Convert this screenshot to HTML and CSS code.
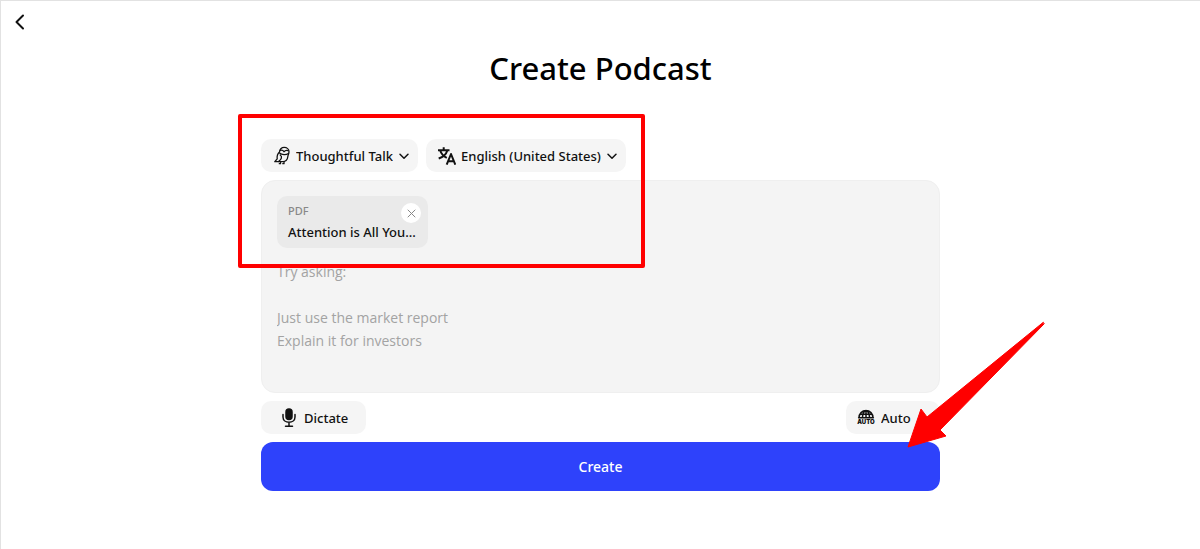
FILE: index.html
```html
<!DOCTYPE html>
<html lang="en">
<head>
    <meta charset="UTF-8">
    <meta name="viewport" content="width=device-width, initial-scale=1.0">
    <title>Create Podcast</title>
    <link rel="stylesheet" href="styles.css">
</head>
<body>
    <header class="topbar">
        <button class="back-btn" type="button" aria-label="Back">
            <svg width="20" height="20" viewBox="0 0 20 20"><path d="M14 3.500 7.500 10l6.500 6.500" /></svg>
        </button>
    </header>

    <main class="content">
        <h1>Create Podcast</h1>

        <form class="podcast-form">
            <div class="row">
                <label class="pill">
                    <!-- Owl -->
                    <svg class="icon owl" width="18" height="20" viewBox="0 0 18 20">
                        <path d="M6.500 6C6.500 3.300 8.500 1.400 11.200 1.400s4.800 1.800 4.800 4.300c0 2-1 2.700-1.200 5-.3 3.200-2.800 5-5.800 5H1.800l2.400-2.900c-.4-2.800.2-4.800 2.300-6.800z" />
                        <path d="M7.500 4.300c1.500-.3 2.800.2 3.500 1.500.8-1.200 2.500-1.700 4.200-1.200M6.500 7c2.500 2.200 6.500 2.200 9 .5M7.200 9c2.400 1.600 1.300 4.700-1.700 6.500M7.500 15.700v2H6.300M11 15.500v2.200H9.800" />
                    </svg>
                    <select aria-label="Style">
                        <option>Thoughtful Talk</option>
                    </select>
                    <svg class="chevron" width="12" height="12" viewBox="0 0 12 12"><path d="M2 4.200 6 8.200 10 4.200" /></svg>
                </label>

                <label class="pill">
                    <!-- Translate -->
                    <svg class="icon translate" width="18" height="20" viewBox="0 0 18 20">
                        <path d="M0 4.200h11.500M5.700 1.200v3M2.200 4.500c1 3.200 3.500 5.800 6.600 7.300M9.300 4.500C8.300 8 5 11 .7 12.500" />
                        <path d="M8.700 18.700 13 8l4.300 10.700M10.300 15.300h5.400" />
                    </svg>
                    <select aria-label="Language">
                        <option>English (United States)</option>
                    </select>
                    <svg class="chevron" width="12" height="12" viewBox="0 0 12 12"><path d="M2 4.200 6 8.200 10 4.200" /></svg>
                </label>
            </div>

            <div class="prompt-box">
                <div class="file-chip">
                    <div class="file-type">PDF</div>
                    <div class="file-name">Attention is All You...</div>
                    <button class="remove-btn" type="button" aria-label="Remove file">
                        <svg width="9" height="9" viewBox="0 0 9 9"><path d="M1 1l7 7M8 1 1 8" /></svg>
                    </button>
                </div>
                <textarea class="prompt" rows="5" aria-label="Prompt" placeholder="Try asking:&#10;&#10;Just use the market report&#10;Explain it for investors"></textarea>
            </div>

            <div class="row row-spread">
                <button class="pill dictate" type="button">
                    <svg class="icon" width="16" height="20" viewBox="0 0 16 20">
                        <rect class="solid" x="5" y="1" width="6" height="10.500" rx="3" />
                        <path d="M2 6.500V9c0 7 12 7 12 0V6.500M8 14.500V18M4.500 18.200h7" />
                    </svg>
                    Dictate
                </button>

                <label class="pill auto">
                    <!-- Half globe with AUTO caption -->
                    <svg class="icon globe" width="20" height="20" viewBox="0 0 20 20">
                        <path d="M3 9.800a7 7.300 0 0 1 14 0M2.600 9.800h14.800M10 2.500v7.300M4 6.200h12M6.500 9.800c0-4 1.500-6.500 3.500-7.300 2 .8 3.500 3.300 3.500 7.300" />
                        <text x="10" y="16" text-anchor="middle">AUTO</text>
                    </svg>
                    <select aria-label="Source">
                        <option>Auto</option>
                    </select>
                    <svg class="chevron" width="12" height="12" viewBox="0 0 12 12"><path d="M2 4.200 6 8.200 10 4.200" /></svg>
                </label>
            </div>

            <button class="create-btn" type="submit">Create</button>

            <!-- Highlight frame and arrow -->
            <div class="highlight"></div>
            <svg class="arrow" width="138" height="128" viewBox="0 0 138 128">
                <path d="M135 1.500 19 96 13 88 0 126 38 115 32 109 136 3z" />
            </svg>
        </form>
    </main>
</body>
</html>
```
FILE: styles.css
```css
* {
    box-sizing: border-box;
}
body {
    margin: 0;
    min-height: 100vh;
    background-color: #fff;
    border-top: 1px solid #e2e2e2;
    border-left: 1px solid #e2e2e2;
    color: #111;
    font-family: "Noto Sans", "Open Sans", sans-serif;
    font-size: 13px;
    font-weight: 500;
}
button, select, textarea {
    font: inherit;
    color: inherit;
    border: none;
    background: none;
    padding: 0;
    margin: 0;
}
button {
    cursor: pointer;
}
svg {
    display: block;
    flex: none;
    fill: none;
    stroke: #111;
    stroke-linecap: round;
    stroke-linejoin: round;
}
.topbar {
    height: 43px;
    padding: 11px 8px;
}
.back-btn svg {
    stroke-width: 2;
}
.content {
    max-width: 711px;
    margin: 0 auto;
    padding: 0 16px;
}
h1 {
    margin: 0 0 47px;
    text-align: center;
    font-size: 31px;
    line-height: 48px;
    font-weight: 500;
    color: #000;
}
.podcast-form {
    position: relative;
    display: flex;
    flex-direction: column;
    gap: 8px;
}
.row {
    display: flex;
    gap: 8px;
}
.row-spread {
    justify-content: space-between;
}
.pill {
    display: flex;
    align-items: center;
    gap: 5px;
    height: 33px;
    padding: 0 8px 0 12px;
    border-radius: 10px;
    background-color: #f5f5f5;
}
.pill select {
    appearance: none;
    outline: none;
}
.icon {
    stroke-width: 1.5;
}
.owl {
    stroke-width: 1.3;
}
.translate {
    stroke-width: 2;
    stroke-linecap: butt;
}
.chevron {
    stroke-width: 1.5;
}
.solid {
    fill: #111;
}
.dictate {
    gap: 7px;
    padding: 0 18px 0 20px;
}
.auto {
    padding: 0 8px 0 10px;
}
.auto .chevron {
    margin-left: 4px;
}
.globe text {
    fill: #111;
    stroke: none;
    font-family: "Inter", sans-serif;
    font-size: 6px;
    font-weight: 900;
}
.prompt-box {
    padding: 15px;
    border: 1px solid #efefef;
    border-radius: 14px;
    background-color: #f4f4f4;
}
.file-chip {
    position: relative;
    width: 151px;
    height: 52px;
    padding: 6px 11px;
    border-radius: 10px;
    background-color: #eaeaea;
}
.file-type {
    font-size: 11px;
    line-height: 18px;
    color: #888;
}
.file-name {
    line-height: 24px;
    white-space: nowrap;
}
.remove-btn {
    position: absolute;
    top: 7px;
    right: 7px;
    display: flex;
    align-items: center;
    justify-content: center;
    width: 20px;
    height: 20px;
    border-radius: 50%;
    background-color: #fff;
}
.remove-btn svg {
    stroke: #888;
}
.prompt {
    display: block;
    width: 100%;
    height: 117px;
    margin-top: 12px;
    resize: none;
    outline: none;
    font-family: "Open Sans", "Noto Sans", sans-serif;
    font-size: 14px;
    line-height: 23px;
    font-weight: 400;
}
.prompt::placeholder {
    color: #a3a3a3;
}
.create-btn {
    height: 49px;
    border-radius: 12px;
    background-color: #2e42fb;
    color: #fff;
    font-size: 14px;
}
.highlight {
    position: absolute;
    top: -25px;
    left: -23px;
    width: 407px;
    height: 154px;
    border: 4px solid #f00;
    border-radius: 2px;
    pointer-events: none;
}
.arrow {
    position: absolute;
    top: 182px;
    right: -106px;
    fill: #f00;
    stroke: #f00;
    overflow: visible;
    pointer-events: none;
}
```
